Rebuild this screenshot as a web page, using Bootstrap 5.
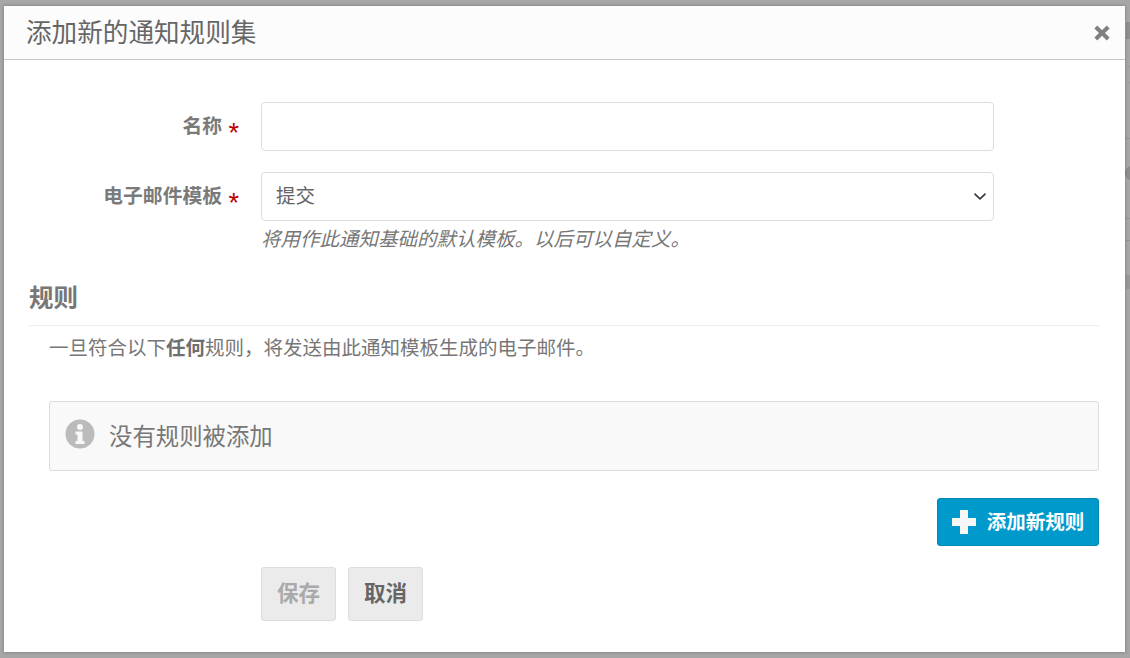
<!DOCTYPE html>
<html lang="zh">
<head>
<meta charset="utf-8">
<title>添加新的通知规则集</title>
<link href="https://cdn.jsdelivr.net/npm/bootstrap@5.3.0/dist/css/bootstrap.min.css" rel="stylesheet">
<style>
html, body { height: 100%; }
body {
  background-color: #a6a6a6;
  background-image:
    linear-gradient(#8f8f8f, #8f8f8f), linear-gradient(#9b9b9b, #9b9b9b), linear-gradient(#9b9b9b, #9b9b9b),
    linear-gradient(#939393, #939393), linear-gradient(#939393, #939393), linear-gradient(#939393, #939393),
    radial-gradient(circle, #8d8d8d 60%, transparent 65%), linear-gradient(#979797, #979797);
  background-size: 4px 17px, 4px 1px, 4px 1px, 4px 1px, 4px 1px, 4px 1px, 16px 16px, 4px 14px;
  background-position: 1126px 22px, 1126px 66px, 1126px 82px, 1126px 138px, 1126px 218px, 1126px 240px, 1124px 165px, 1126px 275px;
  background-repeat: no-repeat;
  font-family: "Liberation Sans", "Noto Sans CJK SC", sans-serif; color: #777; font-size: 19.5px; overflow: hidden; padding: 6px 5px 6px 4px;
}
.dlg { background: #fff; height: 646px; box-shadow: 0 0 3px rgba(0,0,0,.3); }
.dlg-head { height: 54px; background: #fcfcfc; border-bottom: 1px solid #c8c8c8; padding: 0 15px 0 22px; }
.dlg-title { font-size: 25.6px; font-weight: 400; color: #666; margin: 0; line-height: 52px; }
.dlg-close { color: #808080; line-height: 0; }
.dlg-body { padding: 42px 26px 0 25px; }
.frm-row { margin-bottom: 21px; }
.frm-label { width: 232px; flex: none; text-align: right; padding-right: 22px; font-size: 19.8px; font-weight: 700; color: #7a7a7a; line-height: 48px; margin: 0; }
.req { color: #b00; margin-left: 1px; font-weight: 400; font-size: 27px; line-height: 0; vertical-align: -9px; font-family: "Liberation Sans", sans-serif; }
.frm-field { width: 733px; flex: none; height: 49px; border: 1px solid #ddd; border-radius: 4px; background-color: #fff; color: #666; font-size: 19.5px; padding: 0 14px; box-shadow: none; }
.form-select.frm-field { background-size: 17.5px 13px; background-position: right 5px center; }
.frm-hint { font-style: italic; color: #777; margin: 5px 0 0 232px; line-height: 27px; }
.sec-title { font-size: 24.5px; font-weight: 700; color: #777; line-height: 30px; margin: 31px 0 0; padding-bottom: 11px; border-bottom: 1px solid #eee; }
.sec-desc { margin: 9px 0 0 20px; line-height: 27px; color: #777; }
.sec-desc b { color: #6e6e6e; }
.empty-box { margin: 39px 0 0 20px; height: 70px; background: #f9f9f9; border: 1px solid #ddd; border-radius: 3px; padding-left: 15px; font-size: 23.4px; color: #777; gap: 14px; }
.empty-ico { margin-bottom: 5px; }
.empty-txt { padding-top: 3px; }
.add-row { margin-top: 27px; }
.add-btn { width: 162px; height: 48px; background: #0099cc; border: 1px solid #0086b3; border-radius: 3px; color: #fff; font-weight: 700; gap: 11px; font-size: 19.5px; padding: 0; }
.add-btn:hover { background: #0099cc; color: #fff; }
.add-txt { padding-top: 2px; }
.act-row { margin: 21px 0 0 232px; gap: 12px; }
.act-btn { width: 75px; height: 54px; background: #ebebeb; border: 1px solid #ddd; border-radius: 3px; font-size: 21.5px; font-weight: 700; color: #666; padding: 0; }
.act-btn:disabled { background: #ebebeb; border-color: #ddd; color: #aaa; opacity: 1; }
</style>
</head>
<body>
<div class="dlg">
  <div class="dlg-head d-flex align-items-center justify-content-between">
    <h4 class="dlg-title">添加新的通知规则集</h4>
    <span class="dlg-close" aria-label="关闭">
      <svg width="16" height="16" viewBox="0 0 16 16"><path d="M3.200 .6 8 5.200 12.800 .6 15.600 3.400 11 8 15.600 12.600 12.800 15.400 8 10.800 3.200 15.400 .4 12.600 5 8 .4 3.400Z" fill="currentColor"/></svg>
    </span>
  </div>
  <div class="dlg-body">
    <form>
      <div class="d-flex frm-row">
        <label class="frm-label" for="nm">名称 <span class="req">*</span></label>
        <input id="nm" class="form-control frm-field" type="text">
      </div>
      <div class="d-flex">
        <label class="frm-label" for="tp">电子邮件模板 <span class="req">*</span></label>
        <select id="tp" class="form-select frm-field"><option>提交</option></select>
      </div>
      <p class="frm-hint">将用作此通知基础的默认模板。以后可以自定义。</p>
      <h5 class="sec-title">规则</h5>
      <p class="sec-desc">一旦符合以下<b>任何</b>规则，将发送由此通知模板生成的电子邮件。</p>
      <div class="empty-box d-flex align-items-center">
        <svg class="empty-ico" width="30" height="30" viewBox="0 0 30 30"><circle cx="15" cy="15" r="14.5" fill="#bbb"/><circle cx="15" cy="8" r="3" fill="#f9f9f9"/><path d="M10.500 12.500h7v9.500h2v3h-9v-3h2v-6.500h-2z" fill="#f9f9f9"/></svg>
        <span class="empty-txt">没有规则被添加</span>
      </div>
      <div class="d-flex justify-content-end add-row">
        <button type="button" class="btn add-btn d-inline-flex align-items-center justify-content-center">
          <svg width="24" height="24" viewBox="0 0 24 24"><path d="M8 0h8v8h8v8h-8v8H8v-8H0V8h8z" fill="#f7f7f7"/></svg>
          <span class="add-txt">添加新规则</span>
        </button>
      </div>
      <div class="d-flex act-row">
        <button type="button" class="btn act-btn" disabled>保存</button>
        <button type="button" class="btn act-btn">取消</button>
      </div>
    </form>
  </div>
</div>
</body>
</html>
